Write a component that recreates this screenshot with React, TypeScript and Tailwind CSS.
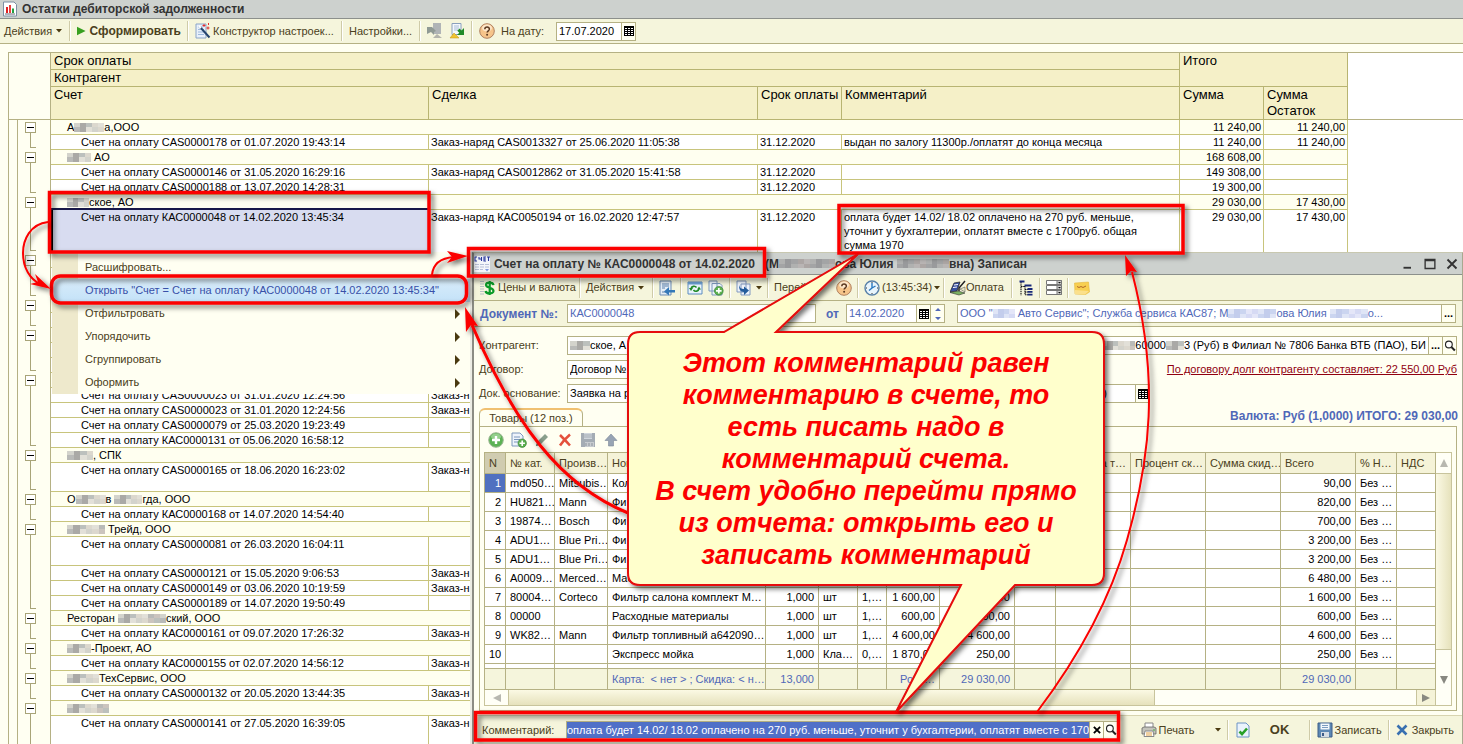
import type { ReactNode } from "react";

type Piece = string | number;

type ReportRow = {
    group?: Piece[];
    account?: string;
    deal?: string;
    due?: string;
    comment?: string;
    sum?: string;
    rest?: string;
    size?: 2 | 3;
    last?: boolean;
    selected?: boolean;
};

const rows: ReportRow[] = [
    { group: ["А", 30, "а,ООО"], sum: "11 240,00", rest: "11 240,00" },
    { account: "CAS0000178 от 01.07.2020 19:43:14", deal: "Заказ-наряд CAS0013327 от 25.06.2020 11:05:38", due: "31.12.2020", comment: "выдан по залогу 11300р./оплатят до конца месяца", sum: "11 240,00", rest: "11 240,00", last: true },
    { group: [24, " АО"], sum: "168 608,00" },
    { account: "CAS0000146 от 31.05.2020 16:29:16", deal: "Заказ-наряд CAS0012862 от 31.05.2020 15:41:58", due: "31.12.2020", sum: "149 308,00" },
    { account: "CAS0000188 от 13.07.2020 14:28:31", due: "31.12.2020", sum: "19 300,00", last: true },
    { group: [22, "ское, АО"], sum: "29 030,00", rest: "17 430,00" },
    { account: "КАС0000048 от 14.02.2020 13:45:34", deal: "Заказ-наряд КАС0050194 от 16.02.2020 12:47:57", due: "31.12.2020", comment: "оплата будет 14.02/ 18.02 оплачено на 270 руб. меньше, уточнит у бухгалтерии, оплатят вместе с 1700руб. общая сумма 1970", sum: "29 030,00", rest: "17 430,00", size: 3, last: true, selected: true },
    { group: [] },
    {},
    { last: true },
    { group: [] },
    { last: true },
    { group: [] },
    {},
    { last: true },
    { group: [] },
    { account: "CAS0000023 от 31.01.2020 12:24:56", deal: "Заказ-н" },
    { account: "CAS0000023 от 31.01.2020 12:24:56", deal: "Заказ-н" },
    { account: "CAS0000079 от 25.03.2020 19:23:49" },
    { account: "КАС0000131 от 05.06.2020 16:58:12", last: true },
    { group: [26, ", СПК"] },
    { account: "CAS0000165 от 18.06.2020 16:23:02", deal: "Заказ-н", size: 2, last: true },
    { group: ["О", 30, "в ", 28, "гда, ООО"] },
    { account: "КАС0000168 от 14.07.2020 14:54:40", last: true },
    { group: [38, " Трейд, ООО"] },
    { account: "CAS0000081 от 26.03.2020 16:04:11", size: 2 },
    { account: "CAS0000121 от 15.05.2020 9:06:53", deal: "Заказ-н" },
    { account: "CAS0000149 от 03.06.2020 10:19:59", deal: "Заказ-н" },
    { account: "CAS0000189 от 14.07.2020 19:50:49", last: true },
    { group: ["Ресторан ", 48, "ский, ООО"] },
    { account: "КАС0000161 от 09.07.2020 17:26:32", deal: "Заказ-н", last: true },
    { group: [24, "-Проект, АО"] },
    { account: "КАС0000155 от 02.07.2020 14:56:12", deal: "Заказ-н", last: true },
    { group: [32, "ТехСервис, ООО"] },
    { account: "CAS0000132 от 20.05.2020 13:44:35", deal: "Заказ-н", last: true },
    { group: [42] },
    { account: "CAS0000141 от 27.05.2020 16:39:05", deal: "Заказ-н", size: 2 },
];

// N, catalogue no., maker, name, quantity, unit, coefficient, price, sum, total
const goods = [
    ["1", "md050…", "Mitsubis…", "Кол", "", "", "", "", "", "90,00"],
    ["2", "HU821…", "Mann", "Фи", "", "", "", "", "", "820,00"],
    ["3", "19874…", "Bosch", "Фи", "", "", "", "", "", "700,00"],
    ["4", "ADU1…", "Blue Pri…", "Фи", "", "", "", "", "", "3 200,00"],
    ["5", "ADU1…", "Blue Pri…", "Фи", "", "", "", "", "", "3 200,00"],
    ["6", "A0009…", "Merced…", "Мас", "", "", "", "", "", "6 480,00"],
    ["7", "80004…", "Corteco", "Фильтр салона комплект М…", "1,000", "шт", "1,…", "1 600,00", "1 600,00", "1 600,00"],
    ["8", "00000", "", "Расходные материалы", "1,000", "шт", "1,…", "600,00", "600,00", "600,00"],
    ["9", "WK82…", "Mann", "Фильтр топливный а642090…", "1,000", "шт", "1,…", "4 600,00", "4 600,00", "4 600,00"],
    ["10", "", "", "Экспресс мойка", "1,000", "Кла…", "0,…", "1 870,00", "250,00", "250,00"],
];

const goodsHead = ["N", "№ кат.", "Произв…", "Ном", "", "", "", "", "", "", "Сумма т…", "Процент ск…", "Сумма скид…", "Всего", "% Н…", "НДС"];
const goodsFoot = ["", "", "", "Карта:  < нет > ; Скидка: < н…", "13,000", "", "", "Розн…", "29 030,00", "", "", "", "", "29 030,00", "", ""];

const mosaicWarm = ["#d3d3cc", "#b9bab8", "#dcd8ce", "#aaa9a6", "#cbc4be", "#e2e0d8", "#bcc0bd"];
const mosaicBlue = ["#dfe5f6", "#cbd5f0", "#d6daf4", "#c3cdec", "#e4e6f8"];
const mosaicGrey = ["#b0b1b0", "#a3a4a5", "#b9b5b4", "#999a9c", "#aca6a4"];

// Pixelated block over private names
function Mosaic({ w, colors = mosaicWarm }: { w: number; colors?: string[] }) {
    const n = Math.max(2, Math.round(w / 6));
    return (
        <span className="flex h-[9px] shrink-0" style={{ width: w }}>
            {Array.from({ length: n }, (_, i) => (
                <span key={i} className="flex h-full flex-1 flex-col">
                    <span className="flex-1" style={{ background: colors[(i * 3) % colors.length] }} />
                    <span className="flex-1" style={{ background: colors[(i * 2 + 1) % colors.length] }} />
                </span>
            ))}
        </span>
    );
}

function Pieces({ items, colors }: { items: Piece[]; colors?: string[] }) {
    return <>{items.map((p, i) => (typeof p === "number" ? <Mosaic key={i} w={p} colors={colors} /> : <span key={i} className="whitespace-pre">{p}</span>))}</>;
}

function Icon({ children, className = "h-4 w-4" }: { children: ReactNode; className?: string }) {
    return <svg viewBox="0 0 16 16" aria-hidden="true" className={`shrink-0 ${className}`}>{children}</svg>;
}

const Caret = () => <svg viewBox="0 0 6 4" aria-hidden="true" className="h-1 w-1.5 shrink-0"><path d="M0 0h6L3 3.5z" fill="#4a3a10" /></svg>;
const Sep = () => <span className="h-5 w-0.5 shrink-0 border-r border-white bg-[#cfcba8]" />;

const CalendarIcon = () => (
    <svg viewBox="0 0 10 10" aria-hidden="true" shapeRendering="crispEdges" className="h-2.5 w-2.5 shrink-0">
        <path d="M0 0h10v10H0z" fill="#000" />
        <path d="M1 2h8M1 4h8M1 6h8M1 8h8" transform="translate(0 .5)" stroke="#fff" strokeDasharray="2 1" />
    </svg>
);
const SearchIcon = () => (
    <Icon className="h-3 w-3">
        <circle cx="6.5" cy="6" r="4.5" fill="#fff" stroke="#222" strokeWidth="1.5" />
        <path d="M10 9.5l4.5 4.5" stroke="#222" strokeWidth="2.8" />
    </Icon>
);
const HelpIcon = () => (
    <Icon>
        <circle cx="8" cy="8" r="7.3" fill="#f6c48a" stroke="#b08060" />
        <ellipse cx="8" cy="5" rx="5" ry="3.5" fill="#fde6c8" />
        <path d="M5.8 6.2c.2-2.9 4.7-2.8 4.6 0-.1 1.6-2.3 1.8-2.3 3.4" fill="none" stroke="#5a3820" strokeWidth="1.5" />
        <circle cx="8.1" cy="11.8" r="1" fill="#5a3820" />
    </Icon>
);
const ReportIcon = () => (
    <Icon>
        <path d="M1.5 1h10.500l2.500 2.500V15h-13z" fill="#fff" stroke="#7d8fa3" />
        <path d="M4 6h2v6H4z" fill="#e02020" /><path d="M7 4h2v8H7z" fill="#e84040" /><path d="M10 7.500h2V12h-2z" fill="#22a040" />
        <path d="M3 13h10" stroke="#667" />
    </Icon>
);
const WandIcon = () => (
    <Icon>
        <path d="M1 1h10v14H1z" fill="#e8f0fa" stroke="#8aa4c8" />
        <path d="M3 4h5M3 6.5h6M3 9h6M3 11.5h6" stroke="#9db8dc" />
        <path d="M5 4l9.5 10.5" stroke="#26456e" strokeWidth="2" />
        <path d="M4 3l2 2" stroke="#fff" strokeWidth="2" />
        <path d="M9 1v3M7.5 2.5h3M13 3.5v3M11.5 5h3M13.5 0v2" stroke="#e03030" />
    </Icon>
);
const StoreIcon = () => (
    <Icon>
        <path d="M6 0h8v11H6z" fill="#b0b4b6" /><path d="M0 4h5l4 4-2 1v3l-3-3-4 2z" fill="#909a94" />
        <path d="M6 15l4-4 5 4z" fill="#b4b4ac" />
    </Icon>
);
const LoadIcon = () => (
    <Icon>
        <path d="M3 .5h9v11H3z" fill="#f4f8fc" stroke="#8aa0bc" /><path d="M5 3h5M5 5h5M5 7h4" stroke="#a8bcd8" />
        <path d="M15 5v7H8l2.3-2.3-2-2L10.5 5.500l2 2z" fill="#208a28" />
        <path d="M1 15l4-5 5 5z" fill="#f0c430" stroke="#c09010" strokeWidth=".5" />
    </Icon>
);
const InvoiceIcon = () => (
    <Icon>
        <path d="M0 0h16v16H0z" fill="#f4f6fb" />
        <path d="M3 1H1v4h2M5 1v2h2M7.5 1v4M12 1h-2v4h2M10 3h2M13 1h3M14.5 1v4" fill="none" stroke="#2838a0" strokeWidth="1.1" />
        <path d="M1 8.5h4M6 8.5h4M11 8.5h4M1 11h4M6 11h4M11 11h4M1 13.5h4M6 13.5h3" stroke="#b8c0d8" />
        <path d="M11 13h4l-2 2.500z" fill="#8098e0" />
    </Icon>
);
const DollarIcon = () => (
    <Icon>
        <path d="M1 1v14M3 1v14" stroke="#7a8cae" strokeDasharray="1 1.5" />
        <path d="M13.5 5.200C13 1.800 6 2 6 5c0 3.200 7.500 2.400 7.500 6 0 3.300-7.500 3.200-8 0M9.700 1v14" fill="none" stroke="#0a9a28" strokeWidth="2.2" />
    </Icon>
);
const PostIcon = () => (
    <Icon>
        <path d="M1 1h11v14H1z" fill="#e4edf6" stroke="#6c8cb4" />
        <path d="M3 4h7M3 6h7M3 8h3M3 12h7" stroke="#5c80ac" />
        <path d="M16 10H10V7l-5 4.5 5 4v-3h6z" fill="#3478b8" />
    </Icon>
);
const RefreshIcon = () => (
    <Icon>
        <path d="M1 2h14v12H1z" fill="#eaf4fc" stroke="#5c8cc0" /><path d="M1 2h14v2.500H1z" fill="#6ca0d4" />
        <path d="M4 9c.3-3 4-3.500 5.500-1.500M12 8.500c-.3 3-4 3.500-5.500 1.500" fill="none" stroke="#208a28" strokeWidth="1.6" />
        <path d="M2 8h4l-2 3zM10 9.500h4l-2-3z" fill="#208a28" />
    </Icon>
);
const CopyAddIcon = () => (
    <Icon>
        <path d="M1 1h8v10H1zM4 3.500h8l2 2V15H4z" fill="#eef4fb" stroke="#7c98bc" />
        <circle cx="10.8" cy="10.8" r="4.4" fill="#5cb050" stroke="#2e7a28" strokeWidth=".6" />
        <path d="M10.800 8v5.600M8 10.800h5.600" stroke="#fff" strokeWidth="1.7" />
    </Icon>
);
const AddRowIcon = () => (
    <Icon>
        <path d="M1 1h8l3 3v10H1z" fill="#eef4fb" stroke="#7c98bc" /><path d="M3 5h6M3 7.500h6M3 10h4" stroke="#7c98bc" />
        <circle cx="11.2" cy="11.2" r="4.2" fill="#5cb050" stroke="#2e7a28" strokeWidth=".6" />
        <path d="M11.200 8.500v5.400M8.500 11.200h5.400" stroke="#fff" strokeWidth="1.6" />
    </Icon>
);
const BasedOnIcon = () => (
    <Icon>
        <path d="M1 1h9v11H1zM5 4h9v11H5z" fill="#eef3fb" stroke="#8098c0" />
        <path d="M3 5c1 3 2 4 5 4V6.500l5 4-5 4.500v-3C4 12 3 9 3 5z" fill="#245c9c" />
    </Icon>
);
const ClockIcon = () => (
    <Icon>
        <circle cx="8" cy="8" r="7" fill="#e8f4fc" stroke="#5880a8" strokeWidth="1.4" />
        <path d="M8 8V3M8 8l3.500-2M8 8L5 10.500" stroke="#2878c0" strokeWidth="1.4" />
        <path d="M8 2v1M8 13v1M2 8h1M13 8h1" stroke="#333" />
    </Icon>
);
const PayIcon = () => (
    <Icon>
        <path d="M4 3l6-1-3 9-7 1z" fill="#3850a0" stroke="#222" strokeWidth=".7" /><path d="M4 5l4-.5M3 7.500l4-.5" stroke="#fff" />
        <path d="M0 12.500l8-1.500 7 2-6 2z" fill="#7ab060" stroke="#333" strokeWidth=".6" />
        <path d="M15 1L9 8v3" fill="none" stroke="#222" strokeWidth="1.5" /><path d="M10 9l5-2v5z" fill="#e8e8c8" stroke="#444" strokeWidth=".5" />
    </Icon>
);
const TreeIcon = () => (
    <Icon>
        <path d="M3 2v13.500M3 6.500h4M7 6v9M7 9.500h3M7 12h3M7 14.700h3" fill="none" stroke="#111" strokeWidth="1.1" strokeDasharray="1.5 .7" />
        <path d="M1.500 1.500h5M6.500 5.500h7M9.500 9h5M9.500 11.800h5M9.500 14.700h5" stroke="#182878" strokeWidth="1.8" />
    </Icon>
);
const ListIcon = () => (
    <Icon>
        {[1, 6, 11].map((y) => (
            <g key={y}>
                <path d={`M.5 ${y - 0.5}h15v4h-15z`} fill="#fff" stroke="#777" />
                <path d={`M11 ${y - 0.5}h4.500v4H11z`} fill="#ccc" stroke="#777" />
                <path d={`M12 ${y + 1}h3l-1.500 1.500z`} fill="#111" />
            </g>
        ))}
    </Icon>
);
const NoteIcon = () => (
    <Icon>
        <path d="M.5 3l14-1 1 10-4 2.500L1 14z" fill="#f8cf50" stroke="#e0b030" strokeWidth=".5" />
        <path d="M1 10l14 1-4 3.500L1 14z" fill="#fbe08c" /><path d="M3 6.500l2 1 2-1 2 1 3-1.500" fill="none" stroke="#b06828" />
    </Icon>
);
const AddIcon = () => (
    <Icon>
        <circle cx="8" cy="8" r="7.3" fill="#5cb254" stroke="#a0b898" /><ellipse cx="8" cy="4.5" rx="5" ry="3" fill="#94d08c" />
        <path d="M8 4v8M4 8h8" stroke="#fff" strokeWidth="2.4" />
    </Icon>
);
const PencilIcon = () => <Icon><path d="M2 14l1-4 8-8 3 3-8 8z" fill="#8aa08c" /><path d="M2 14l1-3 2 2z" fill="#5c6c60" /></Icon>;
const DeleteIcon = () => <Icon><path d="M3 3c3 3 6 6 10 10.500M13 2.500C9 6 6 9 3 13.500" fill="none" stroke="#e4503c" strokeWidth="2.5" /></Icon>;
const SaveRowIcon = () => (
    <Icon><path d="M1 1h14v14H1z" fill="#a4acb4" /><path d="M4 1h8v6H4z" fill="#d0d6dc" /><path d="M4 3h8M4 5h8" stroke="#a4acb4" /><path d="M5 10h9v5H5z" fill="#c8ccd0" /><path d="M6 11v3M9 11v3M12 11v3" stroke="#8c949c" /></Icon>
);
const UpIcon = () => <Icon><path d="M8 2l6 6.500h-3.500V14h-5V8.500H2z" fill="#98a4b4" stroke="#7c8898" strokeWidth=".6" /></Icon>;
const DownIcon = () => <Icon><path d="M8 14L2 7.500h3.500V2h5v5.500H14z" fill="#98a4b4" stroke="#7c8898" strokeWidth=".6" /></Icon>;
const PrintIcon = () => (
    <Icon>
        <path d="M4 1h8v5H4z" fill="#fff" stroke="#888" /><path d="M1 6l2-1h10l2 1v6H1z" fill="#c4c4bc" stroke="#666" strokeWidth=".8" />
        <path d="M4 9h8l1 5.500H3z" fill="#fff" stroke="#888" /><path d="M5 11h6M5 13h6" stroke="#e0a040" /><circle cx="13" cy="8" r=".8" fill="#3a3" />
    </Icon>
);
const DocOkIcon = () => (
    <Icon>
        <path d="M2 1h9l3 3v11H2z" fill="#eaf3fc" stroke="#6c94c4" />
        <path d="M4.500 9.500l2.500 2.500 5-5.500" fill="none" stroke="#28a028" strokeWidth="2.6" />
    </Icon>
);
const DiskIcon = () => (
    <Icon>
        <path d="M1 1h14v14H1z" fill="#5c88b4" stroke="#3c5c88" /><path d="M3.500 1.500h9v6h-9z" fill="#f4f8fc" />
        <path d="M5 3.500h6M5 5.500h6" stroke="#7c9cc0" /><path d="M4 10h8v5H4z" fill="#d4dce4" /><path d="M5 11h2v3H5z" fill="#3c5c88" />
    </Icon>
);
const CloseIcon = () => <Icon className="h-3 w-3"><path d="M2 2l12 12M14 2L2 14" stroke="#3870b0" strokeWidth="3.5" /></Icon>;

function ToolButton({ children, label, className = "gap-1" }: { children?: ReactNode; label?: string; className?: string }) {
    return <button type="button" aria-label={label} className={`flex shrink-0 items-center whitespace-nowrap ${className}`}>{children}</button>;
}

function SmallButton({ children, label }: { children: ReactNode; label: string }) {
    return <button type="button" aria-label={label} className="flex w-3.5 shrink-0 items-center justify-center self-stretch border-l border-[#b5b184] bg-[#fffff0] font-bold text-black">{children}</button>;
}

const field = "flex h-[19px] min-w-0 items-center border border-[#b5b184] bg-white text-black";

// Tree branch drawn in the left gutter of the report
function Branch({ row }: { row: ReportRow }) {
    return (
        <div className="flex h-full">
            <div className="w-[9px] border-r border-[#b5b184]" />
            {row.group ? (
                <div className="flex w-6 flex-col items-center pt-0.5">
                    <button type="button" aria-label="Свернуть" className="flex h-[11px] w-[11px] shrink-0 items-center justify-center border border-[#a8a478] bg-white">
                        <span className="h-px w-[7px] bg-black" />
                    </button>
                    <span className="w-px grow bg-[#a8a478]" />
                </div>
            ) : (
                <div className="flex w-6 pl-3">
                    <span className={row.last ? "mb-0.5 w-1.5 border-b border-l border-[#a8a478]" : "border-l border-[#a8a478]"} />
                </div>
            )}
        </div>
    );
}

function ReportTable() {
    const head = "border-r border-b border-[#b8b472] bg-[#f5f0c8] px-[3px] text-left align-top font-normal";
    const cell = "overflow-hidden border-r border-b border-[#c8c47c] px-0.5 align-top";
    return (
        <table className="w-full table-fixed border-separate border-spacing-0 border-t border-l border-[#b5b184] text-[11px] leading-[14px] text-black">
            <colgroup>
                <col className="w-[42px]" />
                <col className="w-[378px]" />
                <col className="w-[329px]" />
                <col className="w-[84px]" />
                <col className="w-[338px]" />
                <col className="w-[84px]" />
                <col className="w-[84px]" />
                <col />
            </colgroup>
            <thead className="text-[13px] leading-4">
                <tr className="h-[17px]">
                    <td rowSpan={3} className="border-r border-b border-[#b5b184] bg-[#fffff2]" />
                    <th colSpan={4} className={head}>Срок оплаты</th>
                    <th colSpan={2} rowSpan={2} className={head}>Итого</th>
                    <td rowSpan={3} className="border-b border-[#b5b184] bg-white" />
                </tr>
                <tr className="h-[17px]"><th colSpan={4} className={head}>Контрагент</th></tr>
                <tr className="h-[33px]">
                    <th className={head}>Счет</th>
                    <th className={head}>Сделка</th>
                    <th className={`${head} whitespace-nowrap`}>Срок оплаты</th>
                    <th className={head}>Комментарий</th>
                    <th className={head}>Сумма</th>
                    <th className={head}>Сумма Остаток</th>
                </tr>
            </thead>
            <tbody>
                {rows.map((r, i) => {
                    const h = r.size === 3 ? "h-[42px]" : r.size === 2 ? "h-[29px]" : "h-[15px]";
                    return (
                        <tr key={i} className={`${h} ${r.group ? "bg-[#fffff0]" : "bg-white"}`}>
                            <td className="h-px border-r border-[#b5b184] bg-[#fffff2] p-0"><Branch row={r} /></td>
                            {r.group ? (
                                <td colSpan={4} className={`${cell} pl-4`}><div className="flex h-3.5 items-center"><Pieces items={r.group} /></div></td>
                            ) : (
                                <>
                                    <td className={r.selected ? `${cell} border-l-2 border-l-black bg-[#d8dcf0] pl-7 shadow-[0_-2px_0_#181848]` : `${cell} pl-[30px]`}>{r.account && `Счет на оплату ${r.account}`}</td>
                                    <td className={`${cell} whitespace-nowrap`}>{r.deal}</td>
                                    <td className={cell}>{r.due}</td>
                                    <td className={r.size === 3 ? `${cell} pr-6` : cell}>{r.comment}</td>
                                </>
                            )}
                            <td className={`${cell} text-right`}>{r.sum}</td>
                            <td className={`${cell} text-right`}>{r.rest}</td>
                            <td className="bg-white" />
                        </tr>
                    );
                })}
            </tbody>
        </table>
    );
}

function ContextMenu() {
    const items = ["Отфильтровать", "Упорядочить", "Сгруппировать", "Оформить"];
    return (
        <div role="menu" className="absolute top-[252px] left-[52px] w-[418px] bg-[linear-gradient(to_right,#eee9cc_26px,#fffff2_26px)] pt-1 text-[11px] text-[#4a4020]">
            <button type="button" role="menuitem" className="block h-[23px] w-full pl-[33px] text-left">Расшифровать...</button>
            <button type="button" role="menuitem" className="block h-[23px] w-full bg-linear-to-b from-[#d8ecfa] to-[#c4e2f8] pl-[33px] text-left whitespace-nowrap text-[#3850a8]">Открыть "Счет = Счет на оплату КАС0000048 от 14.02.2020 13:45:34"</button>
            {items.map((t) => (
                <button key={t} type="button" role="menuitem" className="flex h-[23px] w-full items-center justify-between pr-2.5 pl-[33px]">
                    {t}
                    <svg viewBox="0 0 5 10" aria-hidden="true" className="h-2.5 w-[5px]"><path d="M0 0l5 5-5 5z" fill="#4a3a10" /></svg>
                </button>
            ))}
        </div>
    );
}

function GoodsTable() {
    const line = "overflow-hidden border-r border-b border-[#b5b184] whitespace-nowrap";
    const right = new Set([0, 4, 6, 7, 8, 13]);
    const align = (i: number) => (right.has(i) ? "px-1 text-right" : "pl-1");
    return (
        <table className="w-full table-fixed border-separate border-spacing-0 border-t border-l border-[#b5b184] bg-white text-[11px] leading-4 text-black">
            <colgroup>
                <col className="w-[21px]" />
                <col className="w-[49px]" />
                <col className="w-[53px]" />
                <col />
                <col className="w-[53px]" />
                <col className="w-[39px]" />
                <col className="w-[29px]" />
                <col className="w-[53px]" />
                <col className="w-[75px]" />
                <col className="w-[41px]" />
                <col className="w-[75px]" />
                <col className="w-[75px]" />
                <col className="w-[75px]" />
                <col className="w-[75px]" />
                <col className="w-[41px]" />
                <col className="w-[39px]" />
            </colgroup>
            <thead>
                <tr className="h-[21px] bg-[#f5f3d8] text-[#4a4020]">
                    {goodsHead.map((t, i) => <th key={i} className={`${line} font-normal ${i === 0 ? "bg-[#d0ccb0]" : ""} ${i === 10 ? "pr-1 text-right" : "pl-1 text-left"}`}>{t}</th>)}
                </tr>
            </thead>
            <tbody>
                {goods.map((g, n) => {
                    const cells = [...g.slice(0, 9), "", "", "", "", g[9], "Без …", ""];
                    return (
                        <tr key={g[0]} className="h-[19px]">
                            {cells.map((t, i) => (
                                <td key={i} className={`${line} ${align(i)} ${n === 0 && i === 0 ? "bg-[#5070c0] text-white" : ""}`}>{t}</td>
                            ))}
                        </tr>
                    );
                })}
                <tr className="h-[5px]">{goodsHead.map((_, i) => <td key={i} className="border-r border-b border-[#b5b184] p-0" />)}</tr>
            </tbody>
            <tfoot>
                <tr className="h-[21px] bg-[#f5f5dc] text-[#5068b8]">
                    {goodsFoot.map((t, i) => <td key={i} className={`${line} ${align(i)} ${i === 3 ? "whitespace-pre" : ""}`}>{t}</td>)}
                </tr>
            </tfoot>
        </table>
    );
}

function InvoiceWindow() {
    return (
        <section className="absolute top-[252px] right-0 left-[472px] flex flex-col border-t border-r border-b border-l-2 border-t-[#c8c8b0] border-r-[#a8a890] border-b-[#888] border-l-[#8c8c84] bg-[#fffff2] text-[11px] text-[#4a4020] shadow-[-2px_0_0_#ecece4]">
            {/* Title bar */}
            <header className="flex h-[22px] items-center border-b border-[#8c908c] bg-[#cdd1ce] pr-1 text-[#333]">
                <h2 className="flex items-center text-xs font-bold"><InvoiceIcon /><span className="ml-1">Счет на оплату № КАС0000048 от 14.02.2020</span><Pieces items={["   (М", 56, "ова Юлия ", 52, "вна) Записан"]} colors={mosaicGrey} /></h2>
                <div className="ml-auto flex items-center gap-2.5">
                    <button type="button" aria-label="Свернуть окно"><Icon className="h-3 w-3"><path d="M2 13h10" stroke="#333" strokeWidth="2.5" /></Icon></button>
                    <button type="button" aria-label="Развернуть окно"><Icon className="h-3 w-3"><path d="M1.500 2h13v12h-13zM1 3.500h14" fill="none" stroke="#333" strokeWidth="1.8" /></Icon></button>
                    <button type="button" aria-label="Закрыть окно"><Icon className="h-3 w-3"><path d="M2 2l12 12M14 2L2 14" stroke="#333" strokeWidth="2.5" /></Icon></button>
                </div>
            </header>
            {/* Toolbar */}
            <div className="flex h-[26px] items-center gap-[5px] border-b border-[#b5b184] bg-[#f5f5dc] pl-1.5">
                <ToolButton className="w-[94px] gap-0.5"><DollarIcon />Цены и валюта</ToolButton>
                <Sep />
                <ToolButton className="w-[61px] gap-1">Действия<Caret /></ToolButton>
                <Sep />
                <ToolButton label="Провести"><PostIcon /></ToolButton>
                <Sep />
                <ToolButton label="Обновить"><RefreshIcon /></ToolButton>
                <ToolButton label="Скопировать"><CopyAddIcon /></ToolButton>
                <Sep />
                <ToolButton label="Ввести на основании"><BasedOnIcon /><Caret /></ToolButton>
                <Sep />
                <ToolButton className="w-[57px] gap-1">Перейти</ToolButton>
                <ToolButton label="Справка"><HelpIcon /></ToolButton>
                <Sep />
                <ToolButton className="w-[74px] gap-0.5"><ClockIcon />(13:45:34)<Caret /></ToolButton>
                <Sep />
                <ToolButton className="w-[56px]"><PayIcon />Оплата</ToolButton>
                <Sep />
                <ToolButton label="Структура подчиненности"><TreeIcon /></ToolButton>
                <Sep />
                <ToolButton label="Список"><ListIcon /></ToolButton>
                <Sep />
                <ToolButton label="Заметка"><NoteIcon /></ToolButton>
            </div>
            {/* Document number */}
            <div className="flex h-[26px] items-center border-b border-[#b5b184] bg-[#f5f5dc] pr-1.5 pl-1.5 text-[#5068b8]">
                <label htmlFor="doc-no" className="w-[87px] text-xs font-bold">Документ №:</label>
                <div className={`${field} w-[249px]`}><input id="doc-no" readOnly defaultValue="КАС0000048" className="w-full px-0.5 text-[#5068b8]" /></div>
                <label htmlFor="doc-date" className="w-[30px] pl-2.5 text-xs font-bold">от</label>
                <div className={`${field} w-[99px]`}>
                    <input id="doc-date" readOnly defaultValue="14.02.2020" className="w-full min-w-0 px-0.5 text-[#5068b8]" />
                    <SmallButton label="Календарь"><CalendarIcon /></SmallButton>
                    <SmallButton label="Изменить дату"><svg viewBox="0 0 6 14" aria-hidden="true" className="h-3.5 w-1.5"><path d="M0 4h6L3 1zM0 10h6l-3 3z" fill="#5068b8" /></svg></SmallButton>
                </div>
                <div className={`${field} ml-3 flex-1`}>
                    <span role="textbox" aria-label="Организация" className="flex flex-1 items-center overflow-hidden px-0.5 text-[#5068b8]"><Pieces items={['ООО "', 22, ' Авто Сервис"; Служба сервиса КАС87; М', 48, "ова Юлия ", 38, "о..."]} colors={mosaicBlue} /></span>
                    <SmallButton label="Выбрать организацию">...</SmallButton>
                </div>
            </div>
            {/* Counterparty, contract, source document */}
            <div className="flex flex-col gap-[5px] px-[5px] pt-[9px]">
                <div className="flex items-center">
                    <label htmlFor="partner" className="w-[88px]">Контрагент:</label>
                    <div className={`${field} w-[240px] pl-0.5`}><Mosaic w={20} /><input id="partner" readOnly defaultValue="ское, А" className="w-full" /></div>
                    <div className={`${field} ml-2 flex-1`}>
                        <span role="textbox" aria-label="Банковский счет" className="flex flex-1 items-center justify-end overflow-hidden pr-0.5"><Pieces items={[34, "60000", 18, "3 (Руб) в Филиал № 7806 Банка ВТБ (ПАО), БИ"]} /></span>
                        <SmallButton label="Выбрать счет">...</SmallButton>
                        <SmallButton label="Открыть счет"><SearchIcon /></SmallButton>
                    </div>
                </div>
                <div className="flex items-center">
                    <label htmlFor="contract" className="w-[88px]">Договор:</label>
                    <div className={`${field} w-[240px]`}><input id="contract" readOnly defaultValue="Договор №" className="w-full px-0.5" /></div>
                    <a href="#debt" className="ml-auto text-[#900010] underline">По договору долг контрагенту составляет: 22 550,00 Руб</a>
                </div>
                <div className="flex items-center">
                    <label htmlFor="source" className="w-[88px] whitespace-nowrap">Док. основание:</label>
                    <div className={`${field} w-[583px]`}>
                        <input id="source" readOnly defaultValue="Заявка на р" className="w-full px-0.5" />
                        <span className="pr-7">)</span>
                        <SmallButton label="Выбрать основание"><CalendarIcon /></SmallButton>
                    </div>
                </div>
            </div>
            {/* Tab strip and totals */}
            <div className="flex items-end justify-between pt-[5px] pr-1 pl-[5px]">
                <button type="button" role="tab" aria-selected="true" className="h-[18px] w-[104px] rounded-t-md border border-t-2 border-b-0 border-[#b5b184] border-t-[#f0c070] text-center leading-4">Товары (12 поз.)</button>
                <strong className="pb-0.5 text-xs text-[#5068b8]">Валюта: Руб (1,0000) ИТОГО: 29 030,00</strong>
            </div>
            <div className="mx-[5px] border border-[#b5b184] p-1 pt-0">
                <div className="flex h-[25px] items-center gap-[7px] pl-1">
                    <ToolButton label="Добавить"><AddIcon /></ToolButton>
                    <ToolButton label="Добавить копированием"><AddRowIcon /></ToolButton>
                    <ToolButton label="Изменить"><PencilIcon /></ToolButton>
                    <ToolButton label="Удалить"><DeleteIcon /></ToolButton>
                    <ToolButton label="Сохранить строку"><SaveRowIcon /></ToolButton>
                    <ToolButton label="Вверх"><UpIcon /></ToolButton>
                    <ToolButton label="Вниз"><DownIcon /></ToolButton>
                </div>
                <div className="flex">
                    <div className="min-w-0 flex-1"><GoodsTable /></div>
                    {/* Vertical scroll bar */}
                    <div className="flex w-4 flex-col items-center border-t border-r border-[#c8c49c] bg-[#fffff6]">
                        <svg viewBox="0 0 8 8" aria-hidden="true" className="my-1.5 h-2 w-2"><path d="M0 8h8L4 0z" fill="#b8b8b0" /></svg>
                        <span className="h-[177px] w-full border-y border-[#c8c49c] bg-linear-to-r from-[#fbf9e4] to-[#e6e2bc]" />
                        <svg viewBox="0 0 8 8" aria-hidden="true" className="mt-auto mb-1.5 h-2 w-2"><path d="M0 0h8L4 8z" fill="#888880" /></svg>
                    </div>
                </div>
                {/* Horizontal scroll bar */}
                <div className="flex h-4 items-center border border-t-0 border-[#c8c49c] bg-[#fffff6] pr-[15px]">
                    <span className="flex w-[23px] justify-center"><svg viewBox="0 0 8 8" aria-hidden="true" className="h-2 w-2"><path d="M8 0v8L0 4z" fill="#b8b8b0" /></svg></span>
                    <span className="h-full w-[68%] border-x border-[#c8c49c] bg-linear-to-b from-[#fbf9e4] to-[#e6e2bc]" />
                    <span className="ml-auto flex h-full w-5 items-center justify-center border-x border-[#c8c49c] bg-[#f5f3d8]"><svg viewBox="0 0 8 8" aria-hidden="true" className="h-2 w-2"><path d="M0 0v8l8-4z" fill="#888880" /></svg></span>
                </div>
            </div>
            {/* Comment and actions */}
            <footer className="mt-1 flex h-[29px] items-center gap-1 border-t border-[#d8d4b0] bg-[#f5f5dc] px-2">
                <label htmlFor="comment" className="w-20">Комментарий:</label>
                <div className={`${field} w-[552px]`}>
                    <input id="comment" readOnly defaultValue="оплата будет 14.02/ 18.02 оплачено на 270 руб. меньше, уточнит у бухгалтерии, оплатят вместе с 170" className="min-w-0 flex-1 bg-[#5070c8] text-white" />
                    <SmallButton label="Очистить"><Icon className="h-2.5 w-2.5"><path d="M3 3l10 10M13 3L3 13" stroke="#000" strokeWidth="3" /></Icon></SmallButton>
                    <SmallButton label="Открыть"><SearchIcon /></SmallButton>
                </div>
                <div className="ml-auto flex items-center gap-1.5">
                    <ToolButton className="gap-0.5"><PrintIcon />Печать</ToolButton>
                    <ToolButton label="Варианты печати" className="w-5 justify-end"><Caret /></ToolButton>
                    <Sep />
                    <ToolButton label="Провести и закрыть"><DocOkIcon /></ToolButton>
                    <ToolButton className="w-[46px] justify-center text-[13px] font-bold">OK</ToolButton>
                    <Sep />
                    <ToolButton className="gap-0.5"><DiskIcon />Записать</ToolButton>
                    <Sep />
                    <ToolButton><CloseIcon />Закрыть</ToolButton>
                </div>
            </footer>
        </section>
    );
}

// Red frames, arrows and the speech bubble laid over both windows
function Annotations() {
    return (
        <>
            <svg width="1463" height="744" viewBox="0 0 1463 744" aria-hidden="true" className="pointer-events-none absolute top-0 left-0 max-w-none">
                <defs>
                    <filter id="shade" x="-20%" y="-20%" width="140%" height="140%">
                        <feDropShadow dx="3" dy="3" stdDeviation="2.5" floodColor="#000" floodOpacity="0.55" />
                    </filter>
                </defs>
                <g fill="none" stroke="#fb0000" strokeWidth="3.5" filter="url(#shade)">
                    <rect x="49.5" y="192.5" width="379.5" height="59.5" />
                    <rect x="51.5" y="276" width="415" height="27" rx="9" />
                    <rect x="839" y="205.5" width="344" height="47.5" />
                    <rect x="468.5" y="248.5" width="296" height="27.5" />
                    <rect x="475.5" y="712.5" width="643" height="27.5" />
                </g>
                <g fill="none" stroke="#fb0000" strokeWidth="2" filter="url(#shade)">
                    <path d="M48 222C30 224 23 240 23 253C23 268 30 279 40 284" />
                    <path d="M432 275C433 263 441 258 454 257" />
                    <path d="M1037 712C1080 655 1110 600 1127 540C1150 460 1160 380 1132 272" />
                    <path d="M628 513C560 485 515 425 472 325" strokeWidth="3" />
                    <g fill="#fb0000" stroke="none">
                        <path d="M51 289l-16-15 3 8-8 2z" />
                        <path d="M468 256l-21-5 5 6-5 6z" />
                        <path d="M1125 255l12 17-6-1-5 5z" />
                        <path d="M465 307l13 19-7-1-5 7z" />
                    </g>
                </g>
                <path
                    d="M640 332H724L858 254L776 332H1092Q1104 332 1104 344V573Q1104 585 1092 585H1015L896 712L961 585H640Q628 585 628 573V344Q628 332 640 332Z"
                    fill="#ffffcc" stroke="#e60808" strokeWidth="2" filter="url(#shade)"
                />
            </svg>
            <p className="absolute top-[347px] left-[628px] w-[476px] text-center text-[27px] leading-8 font-bold text-[#fb0000] italic">
                Этот комментарий равен<br />комментарию в счете, то<br />есть писать надо в<br />комментарий счета.<br />В счет удобно перейти прямо<br />из отчета: открыть его и<br />записать комментарий
            </p>
        </>
    );
}

export default function App() {
    return (
        <main className="relative min-h-screen overflow-hidden bg-[#fffff2] font-['Liberation_Sans',Arial,sans-serif]">
            <header className="flex h-[19px] items-center gap-1 border-b border-[#8c908c] bg-[#cdd1ce] pl-0.5 text-[#333]">
                <ReportIcon />
                <h1 className="text-xs font-bold">Остатки дебиторской задолженности</h1>
            </header>
            <div className="flex h-[25px] items-center gap-1.5 border-b border-[#b5b184] bg-[#f5f5dc] pl-1 text-[11px] text-[#4a4020]">
                <ToolButton className="w-[59px] gap-1">Действия<Caret /></ToolButton>
                <Sep />
                <ToolButton className="w-[104px] gap-1 text-xs font-bold"><svg viewBox="0 0 10 10" aria-hidden="true" className="h-2.5 w-2.5"><path d="M0 0l10 5-10 5z" fill="#38a020" /></svg>Сформировать</ToolButton>
                <Sep />
                <ToolButton className="w-[140px] gap-0.5"><WandIcon />Конструктор настроек...</ToolButton>
                <Sep />
                <ToolButton className="w-16">Настройки...</ToolButton>
                <Sep />
                <ToolButton label="Сохранить значения"><StoreIcon /></ToolButton>
                <ToolButton label="Восстановить значения"><LoadIcon /></ToolButton>
                <Sep />
                <ToolButton label="Справка"><HelpIcon /></ToolButton>
                <label htmlFor="report-date" className="w-[49px]">На дату:</label>
                <div className={`${field} w-20`}>
                    <input id="report-date" readOnly defaultValue="17.07.2020" className="w-full min-w-0 px-0.5" />
                    <SmallButton label="Календарь"><CalendarIcon /></SmallButton>
                </div>
            </div>
            <div className="pt-2 pl-2"><ReportTable /></div>
            <ContextMenu />
            <InvoiceWindow />
            <Annotations />
        </main>
    );
}
